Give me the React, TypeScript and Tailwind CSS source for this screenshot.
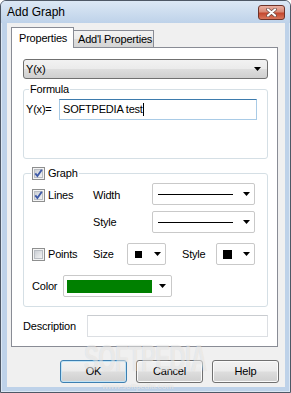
const font = "font-['Liberation_Sans',Arial,sans-serif]";

function Arrow() {
  return (
    <svg width="7" height="4" viewBox="0 0 7 4" className="shrink-0">
      <path d="M0 0h7L3.5 4z" fill="#000" />
    </svg>
  );
}

function CheckBox({ checked }: { checked?: boolean }) {
  return (
    <svg width="13" height="13" viewBox="0 0 13 13" className="shrink-0">
      <defs>
        <linearGradient id="cbfill" x1="0" y1="0" x2="1" y2="1">
          <stop offset="0" stopColor="#c8ccd2" />
          <stop offset="1" stopColor="#f6f6f6" />
        </linearGradient>
      </defs>
      <rect x="0.5" y="0.5" width="12" height="12" fill="#f4f4f4" stroke="#8e8f8f" />
      <rect x="2.5" y="2.5" width="8" height="8" fill="url(#cbfill)" stroke="#b9bdc3" />
      {checked && (
        <path d="M3.3 6.4 L5.4 9 L9.8 2.8" fill="none" stroke="#3e5aa8" strokeWidth="1.9" />
      )}
    </svg>
  );
}

// owner-drawn combo (white box, light border)
function Combo({ className, children }: { className: string; children?: React.ReactNode }) {
  return (
    <div
      className={`h-[22px] flex items-center bg-white border border-[#c9c9c9] rounded-[2px] pr-[4px] ${className}`}
    >
      <div className="flex-1 flex items-center h-full">{children}</div>
      <Arrow />
    </div>
  );
}

function Button({ label, focused }: { label: string; focused?: boolean }) {
  return (
    <button
      className={`w-[67px] h-[23px] rounded-[3px] border bg-[linear-gradient(#f2f2f2,#ebebeb_48%,#dddddd_52%,#cfcfcf)] text-[11px] ${
        focused
          ? "border-[#3c7fb1] shadow-[inset_0_0_0_1px_#c2e4f6]"
          : "border-[#707070] shadow-[inset_0_0_0_1px_#fbfbfb]"
      }`}
    >
      {label}
    </button>
  );
}

export default function App() {
  return (
    <div className={`w-[291px] h-[393px] ${font} text-[11px] tracking-[-0.2px] text-black`}>
      <div className="relative w-full h-full flex flex-col rounded-t-[6px] border border-[#4e5866] bg-[#bed2e9] shadow-[inset_0_0_0_1px_#dbe7f4]">
        {/* title bar */}
        <div className="h-[22px] shrink-0 flex items-center justify-between pl-[6px] pr-[5px] rounded-t-[5px] bg-gradient-to-b from-[#dce8f5] to-[#bed2e9]">
          <span className="text-[12px] tracking-normal">Add Graph</span>
          <div className="w-[27px] h-[15px] rounded-[3px] border border-[#6e3329] bg-[linear-gradient(#eab0a2,#d98a76_45%,#c4472e_55%,#d9765b)] flex items-center justify-center">
            <svg width="11" height="9" viewBox="0 0 11 9">
              <path d="M2 1.5 L9 7.5 M9 1.5 L2 7.5" stroke="#6b4a45" strokeWidth="3.6" strokeLinecap="round" />
              <path d="M2 1.5 L9 7.5 M9 1.5 L2 7.5" stroke="#ffffff" strokeWidth="2.2" strokeLinecap="round" />
            </svg>
          </div>
        </div>

        {/* client area */}
        <div className="ml-[6px] mr-[5px] h-[364px] bg-[#f0f0f0] flex flex-col pt-[4px] pl-[4px] pr-[7px]">
          {/* tabs */}
          <div className="h-[20px] flex items-end">
            <div className="relative z-10 -mb-px h-[21px] w-[63px] flex items-center pl-[7px] bg-white border border-b-0 border-[#898c95]">
              Properties
            </div>
            <div className="-ml-px h-[17px] w-[81px] flex items-center pl-[4px] border border-b-0 border-[#898c95] bg-[linear-gradient(#f3f3f3,#ebebeb_50%,#dddddd_50%,#d6d6d6)]">
              Add'l Properties
            </div>
          </div>

          {/* tab panel */}
          <div className="h-[300px] w-[267px] bg-white border border-[#898c95] flex flex-col pl-[11px] pr-[9px] pt-[11px]">
            {/* function type combo */}
            <div className="h-[20px] flex items-center justify-between pl-[2px] pr-[6px] rounded-[3px] border border-[#707070] bg-[linear-gradient(#f2f2f2,#ebebeb_48%,#dddddd_52%,#cfcfcf)]">
              <span>Y(x)</span>
              <Arrow />
            </div>

            {/* Formula group */}
            <div className="relative mt-[10px] h-[70px] border border-[#d5dfe5] rounded-[3px]">
              <span className="absolute left-[5px] -top-[7px] px-[1px] bg-white leading-[13px]">Formula</span>
              <div className="mt-[9px] pl-[2px] flex items-center">
                <span className="w-[33px]">Y(x)=</span>
                <div className="w-[198px] h-[21px] flex items-center pl-[3px] border border-[#a9cbe6] border-t-[#3d7bad]">
                  <span>SOFTPEDIA test</span>
                  <span className="w-px h-[13px] bg-black" />
                </div>
              </div>
            </div>

            {/* Graph group */}
            <div className="relative mt-[14px] h-[134px] border border-[#d5dfe5] rounded-[3px] pl-[8px] pt-[9px]">
              <div className="absolute left-[7px] -top-[7px] px-[1px] bg-white flex items-center gap-[3px] leading-[13px]">
                <CheckBox checked />
                <span>Graph</span>
              </div>

              <div className="h-[22px] flex items-center">
                <div className="w-[61px] flex items-center gap-[3px] mt-[3px]">
                  <CheckBox checked />
                  <span>Lines</span>
                </div>
                <span className="w-[59px] mt-[3px]">Width</span>
                <Combo className="w-[103px] pl-[5px]">
                  <span className="w-[75px] h-px bg-black" />
                </Combo>
              </div>

              <div className="mt-[6px] h-[22px] flex items-center">
                <div className="w-[61px]" />
                <span className="w-[59px]">Style</span>
                <Combo className="w-[103px] pl-[5px]">
                  <span className="w-[75px] h-px bg-black" />
                </Combo>
              </div>

              <div className="mt-[10px] h-[22px] flex items-center">
                <div className="w-[61px] flex items-center gap-[3px]">
                  <CheckBox />
                  <span>Points</span>
                </div>
                <span className="w-[34px]">Size</span>
                <Combo className="w-[39px] pl-[7px]">
                  <span className="w-[7px] h-[7px] bg-black" />
                </Combo>
                <span className="ml-[16px] w-[34px]">Style</span>
                <Combo className="w-[39px] pl-[6px]">
                  <span className="w-[9px] h-[9px] bg-black" />
                </Combo>
              </div>

              <div className="mt-[10px] h-[22px] flex items-center">
                <span className="w-[31px]">Color</span>
                <Combo className="w-[109px] pl-[3px] pr-[5px]">
                  <span className="w-[85px] h-[13px] bg-[#008000]" />
                </Combo>
              </div>
            </div>

            {/* Description */}
            <div className="mt-[8px] h-[22px] flex items-center">
              <span className="w-[64px]">Description</span>
              <div className="w-[181px] h-[22px] border border-[#dcdfe3] border-t-[#c9ccd0]" />
            </div>
          </div>

          {/* dialog buttons */}
          <div className="relative mt-[13px] -mr-px flex justify-end gap-[9px]">
            <Button label="OK" focused />
            <Button label="Cancel" />
            <Button label="Help" />
            <div className="pointer-events-none absolute left-[73px] -top-[19px] flex items-start text-white/50 [text-shadow:0_0_1px_rgba(0,0,0,0.12)]">
              <span className="text-[36px] font-bold leading-none tracking-[-1px] scale-x-[0.62] origin-left">SOFTPEDIA</span>
            </div>
            <div className="pointer-events-none absolute left-[91px] top-[23px] text-[8px] font-bold leading-none text-white/50 [text-shadow:0_0_1px_rgba(0,0,0,0.12)]">
              www.softpedia.com
            </div>
          </div>
        </div>
      </div>
    </div>
  );
}
